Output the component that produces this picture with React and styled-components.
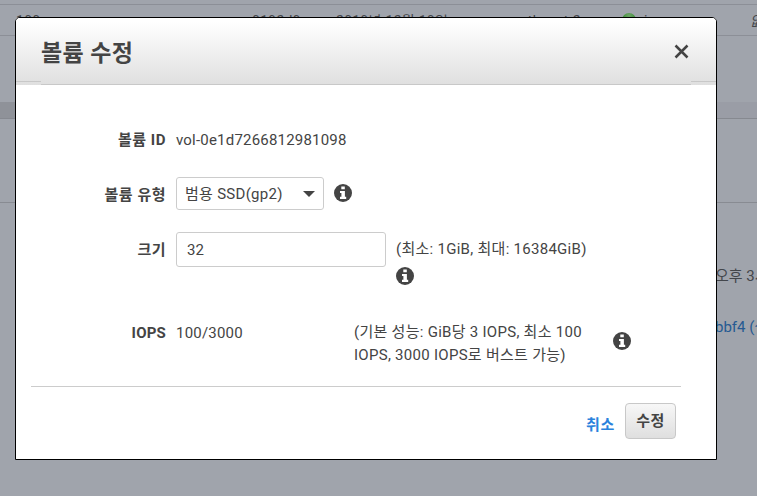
import React from "react";
import styled, { createGlobalStyle } from "styled-components";

const Global = createGlobalStyle`
  * { box-sizing: border-box; }
  body { margin: 0; overflow: hidden; }
`;

const Screen = styled.div`
  position: relative;
  width: 757px;
  height: 496px;
  overflow: hidden;
  background: #a0a4ac;
  color: #444;
  font: 15px/22px Roboto, "Noto Sans CJK KR", sans-serif;
  letter-spacing: 0.28px;
`;

const TableRow = styled.div`
  display: grid;
  grid-template-columns: 236px 84px 150px 128px 30px 106px 60px;
  height: 32px;
  margin-top: 4px;
  padding: 6px 0 0 16px;
  border-top: 1px solid #8c8f97;
  border-bottom: 1px solid #8c8f97;
  color: #43464b;
  font-size: 14px;
  line-height: 20px;
  white-space: nowrap;
`;

const StatusDot = styled.i`
  width: 14px;
  height: 14px;
  margin: 2px 0 0 8px;
  border-radius: 50%;
  background: radial-gradient(circle at 50% 20%, #6fa568, #2f8a2c 65%);
`;

const Splitter = styled.div`
  display: flex;
  height: 17px;
  margin-top: 66px;
  border-bottom: 1px solid #868990;
  background: linear-gradient(90deg, #8f9299 50%, #9a9da6 50%);
`;

const TabStrip = styled.div`
  height: 84px;
  border-bottom: 1px solid #888b92;
`;

const Details = styled.div`
  display: flex;
  flex-direction: column;
  gap: 29px;
  padding: 62px 0 0 715px;
  letter-spacing: 0;
  white-space: nowrap;
`;

const DetailText = styled.span`
  color: ${(p) => (p.$link ? "#265a92" : "#43464b")};
`;

const Modal = styled.section`
  position: absolute;
  left: 15px;
  top: 17px;
  width: 702px;
  height: 443px;
  overflow: hidden;
  border: 1px solid #000;
  border-radius: 5px 5px 0 0;
  background: #fff;
`;

const Header = styled.header`
  display: grid;
  grid-template-columns: 25px 1fr 25px;
  height: 67px;
  background: linear-gradient(#fff 5%, #dfdfdf);
`;

const HeaderEdge = styled.span`
  height: 64px;
  border-bottom: 1px solid #c8c8c8;
`;

const HeaderMain = styled.div`
  display: flex;
  align-items: center;
  justify-content: space-between;
  border-bottom: 1px solid #c8c8c8;
`;

const Title = styled.h1`
  margin: 5px 0 0;
  font-size: 23px;
  line-height: 30px;
  font-weight: 700;
  letter-spacing: 0.4px;
`;

const Close = styled.button`
  display: flex;
  margin: 0 2px 0 0;
  padding: 0;
  border: 0;
  background: none;
`;

const Form = styled.form`
  display: flex;
  flex-direction: column;
  height: 302px;
  margin: 0 35px 0 15px;
  padding-top: 44px;
  border-bottom: 1px solid #ccc;
`;

const Field = styled.div`
  display: grid;
  grid-template-columns: 135px 1fr;
  column-gap: 10px;
  height: ${(p) => p.$height}px;
`;

const Label = styled.label`
  padding-top: ${(p) => p.$drop || 0}px;
  font-weight: 700;
  letter-spacing: ${(p) => (p.$latin ? 0.2 : 0.5)}px;
  text-align: right;
`;

const Controls = styled.div`
  display: flex;
  align-items: flex-start;
`;

const Value = styled.span`
  width: ${(p) => p.$width || "auto"};
  padding-top: ${(p) => p.$drop || 0}px;
  letter-spacing: 0.2px;
`;

const Select = styled.div`
  display: flex;
  align-items: center;
  justify-content: space-between;
  width: 148px;
  height: 33px;
  margin-right: 10px;
  padding: 0 8px;
  border: 1px solid #ccc;
  border-radius: 3px;
`;

const SizeInput = styled.input`
  width: 210px;
  height: 35px;
  margin: 0 10px 0 0;
  padding: 0 10px;
  border: 1px solid #ccc;
  border-radius: 3px;
  outline: 0;
  color: #444;
  font: inherit;
`;

const Hint = styled.div`
  width: ${(p) => p.$width}px;
  padding-top: ${(p) => p.$drop || 0}px;
  line-height: 23px;
  white-space: nowrap;
`;

const InfoSvg = styled.svg`
  display: block;
  flex: none;
  margin-top: ${(p) => p.$drop || 0}px;
`;

const Footer = styled.footer`
  display: flex;
  align-items: flex-start;
  justify-content: flex-end;
  gap: 10px;
  padding: 16px 40px 0 0;
`;

const Cancel = styled.a`
  margin-top: 11px;
  color: #2a82dc;
  font-weight: 700;
  letter-spacing: 0.7px;
`;

const Submit = styled.button`
  width: 51px;
  height: 36px;
  padding: 0;
  border: 1px solid #c8c8c8;
  border-radius: 4px;
  background: linear-gradient(#f7f7f7, #dfdfdf);
  color: #444;
  font: inherit;
  font-weight: 700;
  letter-spacing: 0.5px;
`;

const Info = ({ drop }) => (
  <InfoSvg $drop={drop} width="18" height="18" viewBox="0 0 18 18">
    <circle cx="9" cy="9" r="9" fill="#444" />
    <path d="M7.3 2.6h3.5v2.7H7.3zM6 7h4.9v5.7H12.2v2.2H6v-2.2h1.4V9.1H6z" fill="#fff" />
  </InfoSvg>
);

export default function App() {
  return (
    <Screen>
      <Global />
      <TableRow>
        <span>100</span>
        <span>0192d9...</span>
        <span>2019년 12월 10일...</span>
        <span>ap-northeast-2a</span>
        <StatusDot />
        <span>in-use</span>
        <i>없음</i>
      </TableRow>
      <Splitter />
      <TabStrip />
      <Details>
        <DetailText>오후 3시</DetailText>
        <DetailText $link>bbf4 (실행</DetailText>
      </Details>

      <Modal>
        <Header>
          <HeaderEdge />
          <HeaderMain>
            <Title>볼륨 수정</Title>
            <Close aria-label="닫기">
              <svg width="15" height="15" viewBox="0 0 15 15">
                <path d="M1.5 1.5l12 12M13.5 1.5l-12 12" stroke="#444" strokeWidth="2.5" />
              </svg>
            </Close>
          </HeaderMain>
          <HeaderEdge />
        </Header>
        <Form>
          <Field $height={48}>
            <Label>볼륨 ID</Label>
            <Value>vol-0e1d7266812981098</Value>
          </Field>
          <Field $height={55}>
            <Label $drop={7}>볼륨 유형</Label>
            <Controls>
              <Select>
                범용 SSD(gp2)
                <svg width="12" height="6" viewBox="0 0 12 6">
                  <path d="M0 0h12L6 6z" fill="#444" />
                </svg>
              </Select>
              <Info drop={7} />
            </Controls>
          </Field>
          <Field $height={89}>
            <Label $drop={7}>크기</Label>
            <Controls>
              <SizeInput defaultValue="32" />
              <Hint $width={200} $drop={6}>
                (최소: 1GiB, 최대: 16384GiB)
                <Info drop={6} />
              </Hint>
            </Controls>
          </Field>
          <Field $height={50}>
            <Label $drop={1} $latin>IOPS</Label>
            <Controls>
              <Value $width="178px" $drop={1}>100/3000</Value>
              <Hint $width={259}>
                (기본 성능: GiB당 3 IOPS, 최소 100
                <br />
                IOPS, 3000 IOPS로 버스트 가능)
              </Hint>
              <Info drop={11} />
            </Controls>
          </Field>
        </Form>
        <Footer>
          <Cancel>취소</Cancel>
          <Submit>수정</Submit>
        </Footer>
      </Modal>
    </Screen>
  );
}
